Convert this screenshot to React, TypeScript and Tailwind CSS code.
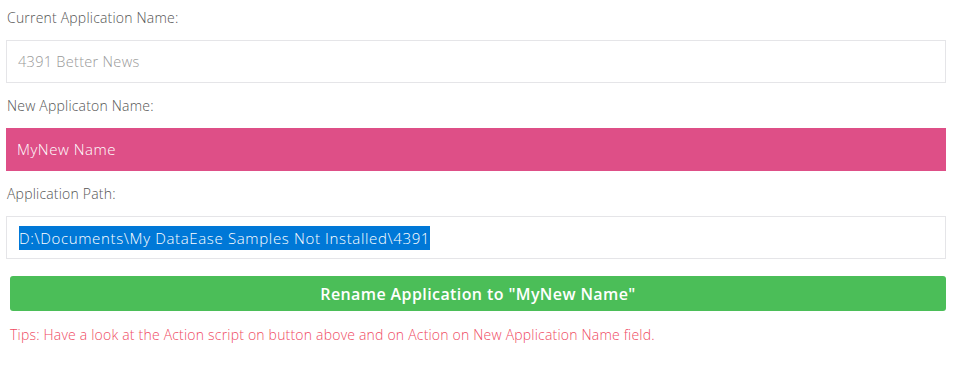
const FONT = "font-['Open_Sans',sans-serif]";

function Label({ children }: { children: React.ReactNode }) {
  return (
    <div className="pl-[1px] text-[14px] tracking-[0.2px] leading-[18px] text-[#555] font-light">
      {children}
    </div>
  );
}

export default function App() {
  return (
    <div className={`${FONT} w-[956px] h-[390px] bg-white pl-[6px] pr-[10px] pt-[9px]`}>
      <Label>Current Application Name:</Label>
      <div className="mt-[13px] h-[43px] border border-[#e5e5e8] flex items-center px-[11px] text-[14.5px] tracking-[0.3px] text-[#999] font-light">
        4391 Better News
      </div>

      <div className="mt-[14px]">
        <Label>New Applicaton Name:</Label>
      </div>
      <div className="mt-[13px] h-[43px] bg-[#de4f87] flex items-center px-[11px] text-[15px] tracking-[0.5px] text-white font-light">
        MyNew Name
      </div>

      <div className="mt-[14px]">
        <Label>Application Path:</Label>
      </div>
      <div className="mt-[13px] h-[43px] border border-[#e5e5e8] flex items-center px-[12px] text-[15px] tracking-[0.65px] font-light">
        <span className="bg-[#0078d7] text-white leading-[24px]">
          D:\Documents\My DataEase Samples Not Installed\4391
        </span>
      </div>

      <div className="pl-[4px] mt-[17px]">
        <button className="w-full h-[35px] rounded-[3px] bg-[#4bbe58] text-white text-[16px] font-semibold tracking-[0.4px]">
          Rename Application to "MyNew Name"
        </button>
        <p className="mt-[13px] text-[14px] tracking-[0.2px] text-[#ef4a62] font-light">
          Tips: Have a look at the Action script on button above and on Action on New Application Name field.
        </p>
      </div>
    </div>
  );
}
